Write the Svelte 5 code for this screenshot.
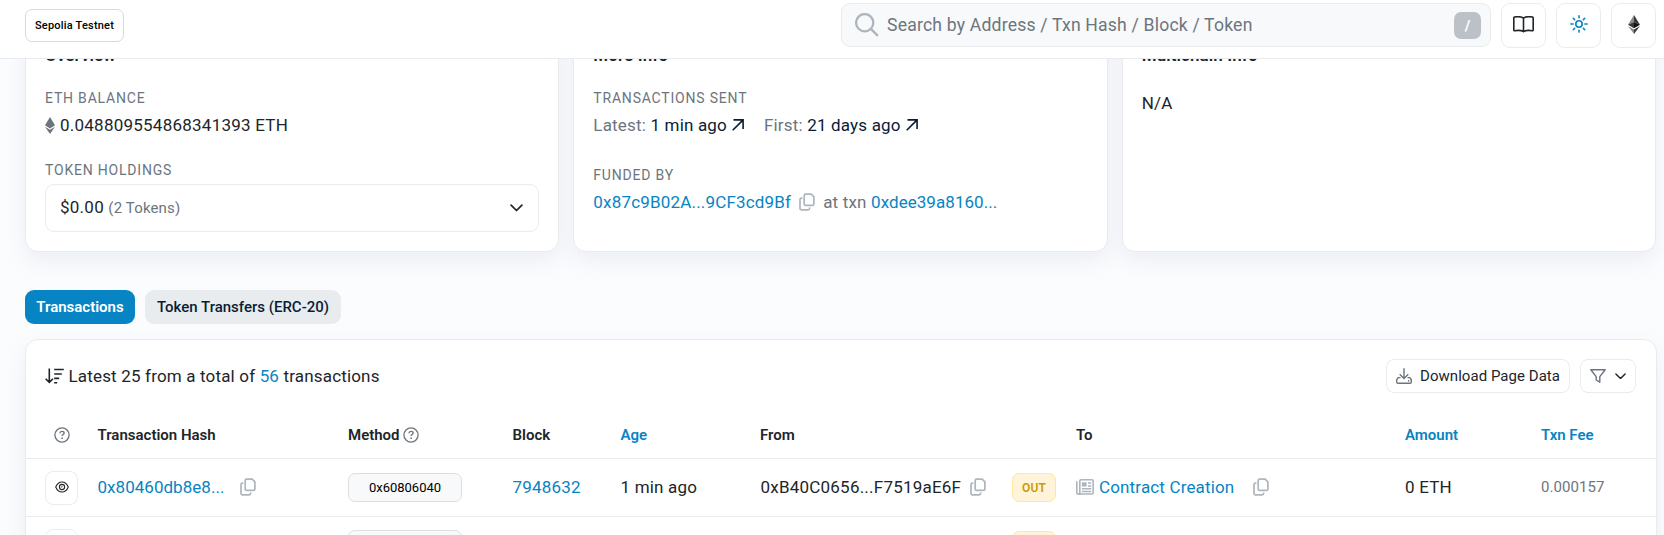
<script>
  const rows = [
    { hash: '0x80460db8e8...', method: '0x60806040', block: '7948632', age: '1 min ago', from: '0xB40C0656...F7519aE6F', to: 'Contract Creation', amount: '0 ETH', fee: '0.000157' },
    { hash: '', method: '', block: '', age: '', from: '', to: '', amount: '', fee: '' }
  ];
</script>

{#snippet copy()}
  <svg class="copy" width="16" height="18" viewBox="0 0 16 18" fill="none" stroke="#adb5bd" stroke-width="1.7">
    <path d="M6.7 1.1h5.5l2.7 2.7v7.1a1.5 1.5 0 0 1-1.5 1.5H6.7a1.5 1.5 0 0 1-1.5-1.5V2.6a1.5 1.5 0 0 1 1.5-1.5z" />
    <path d="M3.4 5.2h-.9A1.5 1.5 0 0 0 1 6.7v8.6a1.5 1.5 0 0 0 1.5 1.5h6.6a1.5 1.5 0 0 0 1.5-1.5v-.9" />
  </svg>
{/snippet}

{#snippet help()}
  <svg class="help" width="16" height="16" viewBox="0 0 16 16" fill="none" stroke="#6c757d">
    <circle cx="8" cy="8" r="7.1" stroke-width="1.3" />
    <path d="M5.9 6.3c.1-1.2 1-1.9 2.1-1.9s2.1.7 2.1 1.7c0 1.4-2 1.5-2 3" stroke-width="1.4" />
    <path d="M8.1 10.4v1.5" stroke-width="1.6" />
  </svg>
{/snippet}

{#snippet arrow()}
  <svg class="arrow" width="12" height="12" viewBox="0 0 12 12" fill="none" stroke="#081d35" stroke-width="1.6">
    <path d="M1.5.9h9.6v9.2M10.9 1.1.7 11.3" />
  </svg>
{/snippet}

{#snippet chevron(w)}
  <svg width={w} height={w * 0.6} viewBox="0 0 12 7.2" fill="none" stroke="#212529" stroke-width="1.6" stroke-linecap="round" stroke-linejoin="round">
    <path d="M1 1l5 5 5-5" />
  </svg>
{/snippet}

<div class="page">
  <header>
    <div class="network">Sepolia Testnet</div>
    <div class="search">
      <svg width="24" height="24" viewBox="0 0 24 24" fill="none" stroke="#adb5bd" stroke-width="2.3">
        <circle cx="9.7" cy="9.7" r="8.6" /><path d="M15.9 15.9l7 7" />
      </svg>
      <span class="hint">Search by Address / Txn Hash / Block / Token</span>
      <span class="key">/</span>
    </div>
    <div class="square">
      <svg width="21" height="17" viewBox="0 0 21 17" fill="none" stroke="#212529" stroke-width="1.6">
        <path d="M10.5 2.1C8.6.8 4 .6 1.6 1a1 1 0 0 0-.8.9v12.2c0 .5.4.8.9.7 2.6-.5 6.8-.4 8.8.9 2-1.3 6.2-1.4 8.8-.9.5.1.9-.2.9-.7V1.9a1 1 0 0 0-.8-.9C17 .6 12.4.8 10.5 2.1zV15.7" />
      </svg>
    </div>
    <div class="square">
      <svg width="18" height="18" viewBox="0 0 18 18" fill="none" stroke="#0784c3" stroke-width="1.6" stroke-linecap="round">
        <circle cx="9" cy="9" r="3.2" />
        <path d="M9 .9v1.9M9 15.2v1.9M.9 9h2.2M14.9 9h2.2M3.3 3.3l1.3 1.3M13.4 13.4l1.3 1.3M3.3 14.7l1.3-1.3M13.4 4.6l1.3-1.3" />
      </svg>
    </div>
    <div class="square">
      <svg width="12" height="19" viewBox="0 0 12 19">
        <path d="M6 0v7L0 9.8z" fill="#8a8a8a" /><path d="M6 0v7l6 2.8z" fill="#393939" />
        <path d="M0 9.8L6 7v6.2z" fill="#393939" /><path d="M12 9.8L6 7v6.2z" fill="#141414" />
        <path d="M0 11l6 3.5V19z" fill="#8c8c8c" /><path d="M12 11l-6 3.5V19z" fill="#3c3c3b" />
      </svg>
    </div>
  </header>

  <main>
    <section class="cards">
      <div class="card">
        <h3>Overview</h3>
        <div class="label">ETH BALANCE</div>
        <div class="value">
          <svg class="eth" width="10" height="17" viewBox="0 0 10 17" fill="#6c757d">
            <path d="M5 0l5 8.3-5 3.1L0 8.3z" /><path d="M0 9.7l5 3 5-3L5 17z" />
          </svg>
          <span class="balance">0.048809554868341393 ETH</span>
        </div>
        <div class="label holdings">TOKEN HOLDINGS</div>
        <div class="select">
          <span class="held"><span class="usd">$0.00</span> <span class="tokens">(2 Tokens)</span></span>
          {@render chevron(13)}
        </div>
      </div>
      <div class="card">
        <h3>More Info</h3>
        <div class="label">TRANSACTIONS SENT</div>
        <div class="value">
          <span class="muted">Latest:&nbsp;</span><span class="dark">1 min ago</span>{@render arrow()}
          <span class="muted first">First:&nbsp;</span><span class="dark">21 days ago</span>{@render arrow()}
        </div>
        <div class="label funded">FUNDED BY</div>
        <div class="value">
          <span class="link addr">0x87c9B02A...9CF3cd9Bf</span>{@render copy()}
          <span class="muted at">at txn&nbsp;</span><span class="link txn">0xdee39a8160...</span>
        </div>
      </div>
      <div class="card">
        <h3>Multichain Info</h3>
        <div class="value na">N/A</div>
      </div>
    </section>

    <nav>
      <span class="tab active">Transactions</span>
      <span class="tab">Token Transfers (ERC-20)</span>
    </nav>

    <section class="table">
      <div class="toolbar">
        <svg width="19" height="16" viewBox="0 0 19 16" fill="none" stroke="#212529" stroke-width="1.6">
          <path d="M4.3.4v13.8M.6 10.7l3.7 3.7L8 10.7M9.2 1.5h9.6M9.2 6h7.6M9.2 10.4h5M9.2 14.8h3" />
        </svg>
        <span class="summary">Latest 25 from a total of <span class="link">56</span> transactions</span>
        <div class="button download">
          <svg width="16" height="16" viewBox="0 0 16 16" fill="none" stroke="#6c757d" stroke-width="1.4">
            <path d="M8 .3v10.2M3.7 6.3L8 10.5l4.3-4.2M4.5 9.6H2.2L.7 11.8v2.1c0 .8.5 1.3 1.3 1.3h12c.8 0 1.3-.5 1.3-1.3v-2.1l-1.5-2.2h-2.3" />
            <path d="M12 12.8h1.3" />
          </svg>
          <span>Download Page Data</span>
        </div>
        <div class="button filter">
          <svg width="16" height="14" viewBox="0 0 16 14" fill="none" stroke="#6c757d" stroke-width="1.4" stroke-linejoin="round">
            <path d="M.8.8h14.4L9.8 7.6v5.6L6.2 11V7.6z" />
          </svg>
          {@render chevron(11)}
        </div>
      </div>

      <div class="row head">
        <span class="center">{@render help()}</span>
        <span>Transaction Hash</span>
        <span class="method-head">Method {@render help()}</span>
        <span>Block</span>
        <span class="link">Age</span>
        <span>From</span>
        <span></span>
        <span>To</span>
        <span class="link">Amount</span>
        <span class="link">Txn Fee</span>
      </div>

      {#each rows as row}
        <div class="row">
          <span class="eye">
            <svg width="14" height="12" viewBox="0 0 14 12" fill="none" stroke="#212529" stroke-width="1.1">
              <path d="M.7 6C2 3 4.3 1 7 1s5 2 6.3 5c-1.3 3-3.6 5-6.3 5S2 9 .7 6z" />
              <circle cx="7" cy="6" r="2.6" /><path d="M5.8 6.2c.9.2 1.4-.4 1.2-1.4" stroke-width=".8" />
            </svg>
          </span>
          <span class="cell link hash">{row.hash}{#if row.hash}<span class="gap"></span>{@render copy()}{/if}</span>
          <span class="method" class:lift={!row.method}>{row.method}</span>
          <span class="text link">{row.block}</span>
          <span class="text">{row.age}</span>
          <span class="cell from">{row.from}{#if row.from}{@render copy()}{/if}</span>
          <span class="out">OUT</span>
          <span class="cell link to">
            {#if row.to}
              <svg width="18" height="16" viewBox="0 0 18 16" fill="none" stroke="#adb5bd" stroke-width="1.6">
                <rect x="3.8" y=".8" width="13.4" height="14.2" rx="1.3" />
                <path d="M.8 2.2v11c0 1.2.7 1.9 2 1.9h2" />
                <path d="M5.8 3.3h4.8v4.2H5.8z" fill="#adb5bd" stroke="none" />
                <path d="M12 4h3.3M12 7h3.3M5.8 9.8h9.5M5.8 12.4h9.5" stroke-width="1.5" />
              </svg>
              <span class="contract">{row.to}</span>{@render copy()}
            {/if}
          </span>
          <span class="text">{row.amount}</span>
          <span class="text fee">{row.fee}</span>
        </div>
      {/each}
    </section>
  </main>
</div>

<style>
  :global(body) { margin: 0; }
  .page { height: 535px; overflow: hidden; background: #fbfcfe; color: #212529; font: 17px/26px Roboto, sans-serif; letter-spacing: 0.18px; display: flex; flex-direction: column; box-sizing: border-box; white-space: nowrap; }
  .page :global(*) { box-sizing: border-box; }
  svg { flex: none; display: block; }
  header { height: 59px; flex: none; background: #fff; border-bottom: 1px solid #e9ecef; display: flex; align-items: flex-start; padding: 3px 8px 0 25px; gap: 10px; }
  .network { width: 99px; height: 33px; margin: 6px auto 0 0; border: 1px solid #d7d9dc; border-radius: 7px; text-align: center; font-size: 11px; font-weight: 500; line-height: 31px; color: #000; letter-spacing: 0.2px; }
  .search { width: 650px; height: 44px; border: 1px solid #e9ecef; border-radius: 9px; background: #f8f9fa; display: flex; align-items: center; padding: 0 9px 0 13px; }
  .hint { flex: 1; margin-left: 8px; font-size: 17.6px; color: #6c757d; letter-spacing: 0.19px; }
  .key { width: 27px; height: 27px; border-radius: 7px; background: #bcc1c7; color: #fff; text-align: center; font-size: 15px; font-weight: 700; line-height: 28px; }
  .square { width: 45px; height: 45px; border: 1px solid #e9ecef; border-radius: 9px; display: flex; align-items: center; justify-content: center; padding-bottom: 3px; }
  main { flex: 1; min-height: 0; overflow: hidden; padding: 0 7px 0 25px; display: flex; flex-direction: column; }
  .cards { flex: none; margin-top: -37px; height: 230px; padding-right: 1px; display: grid; grid-template-columns: repeat(3, 1fr); grid-template-rows: 230px; gap: 14px; }
  .card, .table { background: #fff; border: 1px solid #e9ecef; border-radius: 13px; box-shadow: 0 9px 21px rgba(189, 197, 209, 0.24); }
  .card { padding: 20px 19px 0; }
  h3 { margin: 0 0 20px; font-size: 17px; font-weight: 600; line-height: 24px; letter-spacing: 0.1px; }
  .label { font-size: 14px; line-height: 22px; color: #6c757d; letter-spacing: 0.8px; margin-bottom: 3px; }
  .value { display: flex; align-items: center; }
  .balance { margin-left: 5px; letter-spacing: 0.24px; }
  .holdings { margin-top: 21px; margin-bottom: 3px; }
  .funded { margin-top: 26px; }
  .select { height: 48px; border: 1px solid #e9ecef; border-radius: 9px; display: flex; align-items: center; justify-content: space-between; padding: 0 15px 0 14px; }
  .held { padding-bottom: 2px; }
  .usd { letter-spacing: 0.25px; }
  .tokens { font-size: 15px; letter-spacing: 0.15px; color: #6c757d; }
  .muted { color: #6c757d; }
  .dark { color: #081d35; }
  .link { color: #0784c3; }
  .arrow { margin: 0 0 1px 5px; }
  .first { margin-left: 20px; }
  .value .copy { margin: 0 8px 1px; }
  .txn { letter-spacing: 0.05px; }
  .na { margin-top: 23px; }
  nav { flex: none; margin-top: 38px; display: flex; gap: 10px; }
  .tab { height: 34px; border-radius: 9px; background: #e9ecef; color: #081d35; font-size: 15px; font-weight: 500; line-height: 34px; width: 196px; text-align: center; letter-spacing: 0; }
  .tab.active { width: 110px; background: #0784c3; color: #fff; font-weight: 600; }
  .table { flex: none; margin-top: 15px; height: 260px; }
  .toolbar { padding: 19px 20px 0 19px; height: 70px; display: flex; align-items: flex-start; }
  .toolbar > svg { margin-top: 9px; }
  .summary { margin: 4px auto 0 4.5px; letter-spacing: 0.17px; }
  .button { height: 34px; border: 1px solid #e9ecef; border-radius: 8px; display: flex; align-items: center; justify-content: space-between; padding: 0 9px; font-size: 15px; letter-spacing: 0; }
  .download { width: 184px; }
  .download span { letter-spacing: 0.04px; }
  .filter { width: 56px; margin-left: 10px; }
  .row { height: 58px; padding-left: 19px; border-bottom: 1px solid #e9ecef; display: grid; align-items: center; grid-template-columns: 52.5px 250.5px 164.5px 108px 139.5px 252px 64px 329px 136px 1fr; }
  .head { height: 49px; padding-top: 1px; font-size: 15px; font-weight: 600; letter-spacing: 0; }
  .center { padding-left: 8.5px; }
  .method-head { display: flex; align-items: center; gap: 3px; }
  .eye { width: 33px; height: 34px; border: 1px solid #e9ecef; border-radius: 8px; display: flex; align-items: center; justify-content: center; padding-bottom: 2px; }
  .text { padding-bottom: 2px; }
  .cell { display: flex; align-items: center; padding-bottom: 2px; }
  .hash { letter-spacing: 0.03px; }
  .gap { width: 16px; }
  .method { width: 114px; height: 29px; border: 1px solid #dcdfe2; border-radius: 7px; background: #f8f9fa; text-align: center; font-size: 13px; line-height: 28px; color: #000; letter-spacing: 0; }
  .lift { margin-top: -2px; }
  .from { letter-spacing: 0.22px; padding-left: 0.5px; }
  .from .copy { margin-left: 9px; }
  .out { width: 44px; height: 29px; border: 1px solid #ffe7a3; border-radius: 7px; background: #fff4d9; color: #cc9a06; text-align: center; font-size: 12px; font-weight: 600; line-height: 28px; letter-spacing: 0.2px; }
  .contract { margin: 0 18.5px 0 5px; letter-spacing: 0.15px; }
  .fee { font-size: 15px; letter-spacing: 0.05px; color: #6c757d; }
</style>
